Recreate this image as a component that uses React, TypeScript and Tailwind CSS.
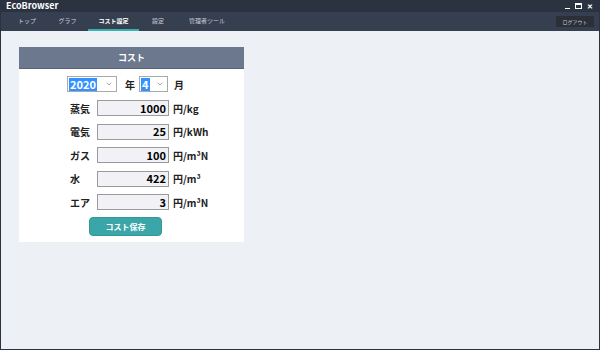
import { ChevronDown } from 'lucide-react';

const font = { fontFamily: '"Noto Sans CJK JP", "Noto Sans", sans-serif' };

const tabs = [
  { name: 'トップ', w: 'w-[40px]' },
  { name: 'グラフ', w: 'w-[41px]' },
  { name: 'コスト設定', w: 'w-[51px]', active: true },
  { name: '設定', w: 'w-[38px]' },
  { name: '管理者ツール', w: 'w-[60px]' },
];

const rows = [
  { label: '蒸気', value: '1000', unit: '円/kg' },
  { label: '電気', value: '25', unit: '円/kWh' },
  { label: 'ガス', value: '100', unit: '円/m³N' },
  { label: '水', value: '422', unit: '円/m³' },
  { label: 'エア', value: '3', unit: '円/m³N' },
];

function Select({ value, className }: { value: string; className: string }) {
  return (
    <div className={`flex items-center h-[16px] border border-[#a9a9a9] bg-white pl-[1px] pr-[3px] ${className}`}>
      <span className="bg-[#3392ff] text-white font-bold text-[11px] leading-[13px] px-[1px]">{value}</span>
      <ChevronDown className="ml-auto text-[#666]" size={8} strokeWidth={1.75} />
    </div>
  );
}

export default function App() {
  return (
    <div className="w-[600px] h-[350px] flex flex-col bg-[#2b3340] border border-[#2b3340] border-t-0 overflow-hidden" style={font}>
      {/* title bar */}
      <div className="h-[12px] flex items-center justify-between pl-[5px] pr-[6px]">
        <span className="text-white font-bold text-[9px] leading-[12px]">EcoBrowser</span>
        <div className="flex items-center gap-[5px] text-white leading-none">
          <span className="w-[5px] h-[1px] bg-white mt-[4px]" />
          <span className="w-[7px] h-[6px] border border-white border-t-2" />
          <span className="text-[7px] font-bold">✕</span>
        </div>
      </div>

      {/* tab bar */}
      <div className="h-[19px] flex items-stretch bg-[#363f50] text-[#c9ced6] text-[6px]">
        <div className="flex items-stretch pl-[6px]">
          {tabs.map((t) => (
            <div
              key={t.name}
              className={`${t.w} flex items-center justify-center border-b-2 ${
                t.active ? 'text-white font-bold border-[#35b3ae]' : 'border-transparent'
              }`}
            >
              {t.name}
            </div>
          ))}
        </div>
        <div className="ml-auto flex items-center pr-[5px]">
          <div className="w-[38px] h-[11px] bg-[#2a2f38] flex items-center justify-center text-[5px] text-[#c8ccd3]">
            ログアウト
          </div>
        </div>
      </div>

      {/* content */}
      <div className="flex-1 bg-[#edf1f5] pt-[16px] pl-[18px]">
        <div className="w-[225px] bg-white pb-[6px]">
          <div className="h-[22px] bg-[#6b788e] border-b border-[#586478] flex items-center justify-center text-white font-bold text-[9px]">
            コスト
          </div>

          <div className="flex items-center pl-[48px] mt-[7px] text-[10px] font-bold text-[#222]">
            <Select value="2020" className="w-[50px]" />
            <span className="ml-[8px]">年</span>
            <Select value="4" className="w-[29px] ml-[4px]" />
            <span className="ml-[6px]">月</span>
          </div>

          <div className="flex flex-col gap-[7.5px] mt-[8px]">
            {rows.map((r) => (
              <div key={r.label} className="flex items-center h-[16px] font-bold text-[#222]">
                <span className="w-[78px] pl-[51px] text-[10px]">{r.label}</span>
                <div className="w-[72px] h-[16px] border border-[#9a9a9a] bg-[#f2f2f6] flex items-center justify-end pr-[2px] text-[11px] text-black">
                  {r.value}
                </div>
                <span className="ml-[4px] font-semibold text-[10px]">{r.unit}</span>
              </div>
            ))}
          </div>

          <div className="flex pl-[70px] mt-[7px]">
            <button className="w-[73px] h-[19px] rounded-[4px] bg-[#3aa6a8] border border-[#34989a] text-white font-bold text-[8px]">
              コスト保存
            </button>
          </div>
        </div>
      </div>
    </div>
  );
}
